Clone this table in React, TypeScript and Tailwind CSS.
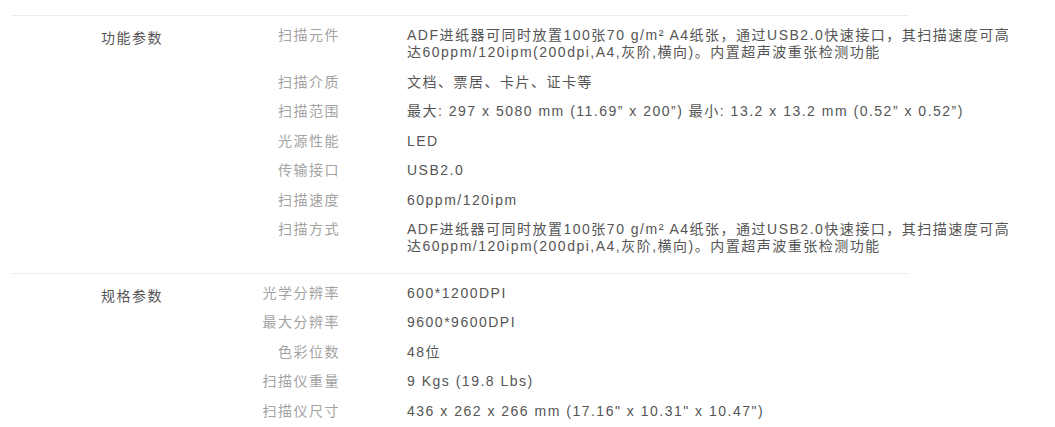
import React from 'react';

type Row = { label: string; value: string };

const sections: { title: string; rows: Row[] }[] = [
  {
    title: '功能参数',
    rows: [
      {
        label: '扫描元件',
        value:
          'ADF进纸器可同时放置100张70 g/m² A4纸张，通过USB2.0快速接口，其扫描速度可高达60ppm/120ipm(200dpi,A4,灰阶,横向)。内置超声波重张检测功能',
      },
      { label: '扫描介质', value: '文档、票居、卡片、证卡等' },
      { label: '扫描范围', value: '最大: 297 x 5080 mm (11.69” x 200”) 最小: 13.2 x 13.2 mm (0.52” x 0.52”)' },
      { label: '光源性能', value: 'LED' },
      { label: '传输接口', value: 'USB2.0' },
      { label: '扫描速度', value: '60ppm/120ipm' },
      {
        label: '扫描方式',
        value:
          'ADF进纸器可同时放置100张70 g/m² A4纸张，通过USB2.0快速接口，其扫描速度可高达60ppm/120ipm(200dpi,A4,灰阶,横向)。内置超声波重张检测功能',
      },
    ],
  },
  {
    title: '规格参数',
    rows: [
      { label: '光学分辨率', value: '600*1200DPI' },
      { label: '最大分辨率', value: '9600*9600DPI' },
      { label: '色彩位数', value: '48位' },
      { label: '扫描仪重量', value: '9 Kgs (19.8 Lbs)' },
      { label: '扫描仪尺寸', value: '436 x 262 x 266 mm (17.16" x 10.31" x 10.47")' },
    ],
  },
];

function Section({ title, rows }: { title: string; rows: Row[] }) {
  return (
    <div>
      <div className="ml-3 w-[897px] h-px bg-[#ececec]" />
      <div className="flex pt-[5px] pb-[11px]">
        <div className="w-[200px] shrink-0 pl-[101px] pt-[9px] leading-[17px] text-[#555]">{title}</div>
        <div className="flex flex-col">
          {rows.map((r) => (
            <div key={r.label} className="flex py-[6.25px] leading-[17px]">
              <div className="w-[140px] shrink-0 text-right text-[#a3a3a3]">{r.label}</div>
              <div className="ml-[67px] w-[612px] text-[#555]">{r.value}</div>
            </div>
          ))}
        </div>
      </div>
    </div>
  );
}

export default function App() {
  return (
    <div
      className="w-[1055px] h-[427px] overflow-hidden bg-white pt-[15px] text-[14px] tracking-[1.5px]"
      style={{ fontFamily: '"Liberation Sans", "Noto Sans CJK SC", sans-serif' }}
    >
      {sections.map((s) => (
        <Section key={s.title} title={s.title} rows={s.rows} />
      ))}
    </div>
  );
}
